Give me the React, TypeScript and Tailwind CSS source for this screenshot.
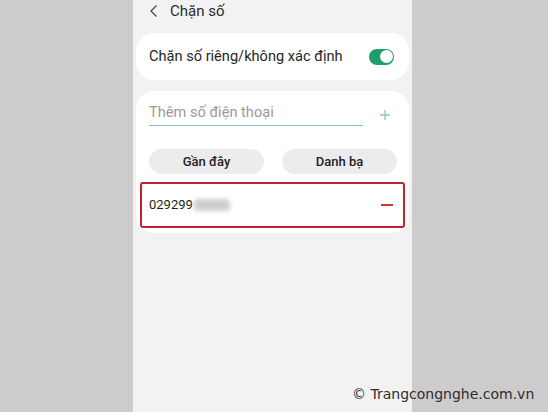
import React from "react";

export default function App() {
  return (
    <div
      className="relative w-[548px] h-[412px] overflow-hidden bg-[#cdcbcc]"
      style={{ fontFamily: "Roboto, 'Noto Sans', sans-serif" }}
    >
      <div className="ml-[133px] w-[279px] h-[412px] bg-[#f2f2f2] px-[3px] flex flex-col">
        {/* header */}
        <div className="h-[22px] flex items-center">
          <svg width="10" height="14" viewBox="0 0 10 14" className="ml-[13px]">
            <path d="M7.5 1.5 L2 7 L7.5 12.5" fill="none" stroke="#4a4a4a" strokeWidth="1.3" />
          </svg>
          <span className="ml-[11px] text-[15px] text-[#2b2b2b]">Chặn số</span>
        </div>

        {/* card 1 */}
        <div className="mt-[11px] h-[47px] rounded-[18px] bg-white pl-[13px] pr-[15px] flex items-center justify-between">
          <span className="text-[14.6px] text-[#262626]">Chặn số riêng/không xác định</span>
          <div className="relative w-[25px] h-[16px] rounded-full bg-[#1e9e6c]">
            <div className="absolute right-[1.5px] top-[1.5px] w-[13px] h-[13px] rounded-full bg-white" />
          </div>
        </div>

        {/* card 2 */}
        <div className="mt-[11px] rounded-[18px] bg-white pt-[11px] pb-[5px]">
          <div className="flex items-center px-[13px]">
            <div className="w-[214px] border-b border-[#8fbfae] pb-[3px] text-[14.6px] leading-[20px] text-[#9a9a9a]">
              Thêm số điện thoại
            </div>
            <svg width="12" height="12" viewBox="0 0 12 12" className="ml-[16px] mt-[2px]">
              <path d="M6 1 V11 M1 6 H11" stroke="#8ccdb4" strokeWidth="1.3" />
            </svg>
          </div>
          <div className="mt-[23px] flex justify-between px-[13px] pr-[12px]">
            <div className="w-[115px] h-[25px] rounded-full bg-[#ececec] flex items-center justify-center text-[13px] font-medium text-[#222]">
              Gần đây
            </div>
            <div className="w-[115px] h-[25px] rounded-full bg-[#ececec] flex items-center justify-center text-[13px] font-medium text-[#222]">
              Danh bạ
            </div>
          </div>
          <div className="mt-[8px] mx-[4px] h-[46px] rounded-[3px] border-[2.5px] border-[#c1232d] bg-white flex items-center justify-between pl-[7px] pr-[10px]">
            <div className="flex items-center">
              <span className="text-[13px] text-[#1e1e1e]">029299</span>
              <span className="ml-[1px] w-[36px] h-[12px] rounded-[4px] bg-[#cfcfcf] blur-[2px]" />
            </div>
            <div className="w-[12px] h-[2px] bg-[#c8363b]" />
          </div>
        </div>
      </div>

      <div
        className="absolute left-[352px] top-[385px] whitespace-nowrap text-[14px] leading-[18px] text-[#2e2e2e]"
        style={{ fontFamily: "'DejaVu Sans', sans-serif" }}
      >
        © Trangcongnghe.com.vn
      </div>
    </div>
  );
}
